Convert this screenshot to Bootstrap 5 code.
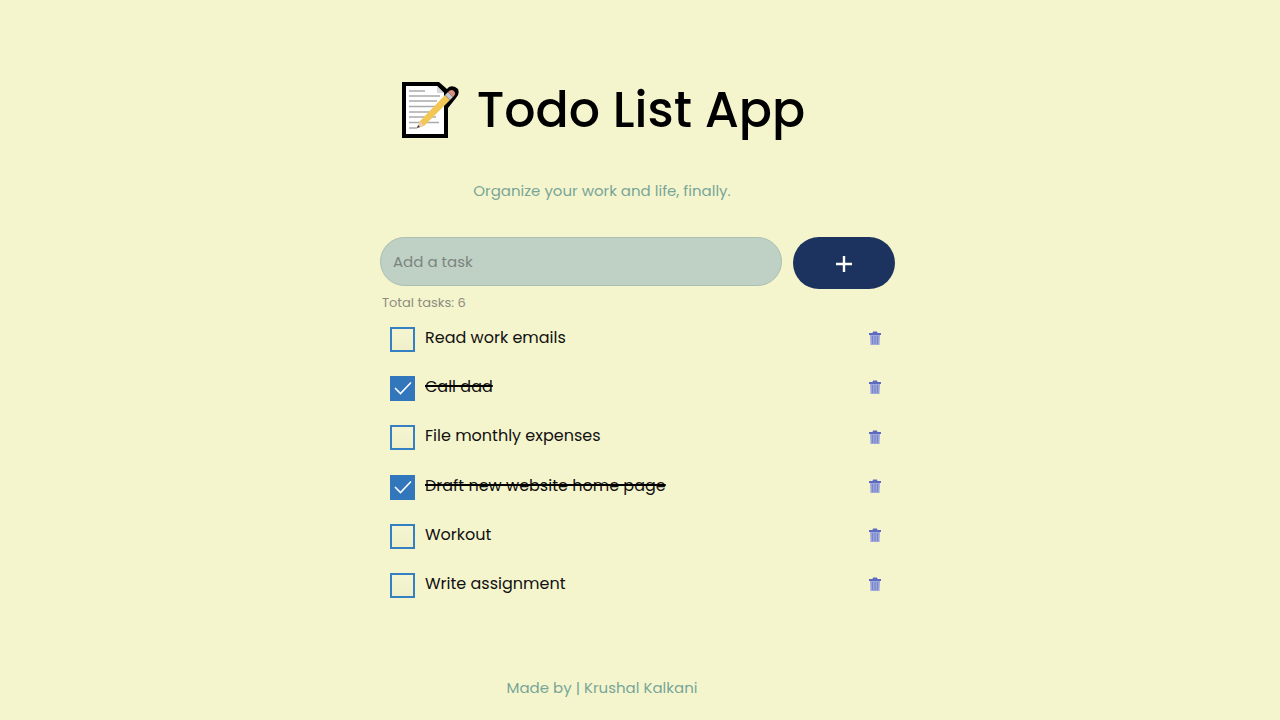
<!DOCTYPE html>
<html lang="en">
<head>
<meta charset="utf-8">
<meta name="viewport" content="width=device-width, initial-scale=1">
<title>Todo List App</title>
<link href="https://cdn.jsdelivr.net/npm/bootstrap@5.3.0/dist/css/bootstrap.min.css" rel="stylesheet">
<style>
body { background: #f5f5cd; color: #111; font-family: Poppins, Inter, sans-serif; font-size: 16px; line-height: 24px; }
.todo-app { max-width: 520px; }
.todo-centered { padding-right: 76px; }
.todo-title { color: #000; font-size: 49px; line-height: 60px; font-weight: 500; }
.todo-title svg { margin-right: 18px; }
.todo-muted { color: #78a598; font-size: 15px; }
.todo-sub { margin: 39px 0 0; }
.todo-form { padding: 34px 5px 0 0; }
.todo-input, .todo-input:focus { height: 49px; padding: 0 12px; line-height: 32px; background: #bfd0c4; border: 1px solid #aabfb2; font-size: 15px; }
.todo-input::placeholder { color: #7b8580; }
.todo-add { width: 102px; height: 52px; margin-left: 11px; background: #1d335f; }
.todo-add:hover { background: #2a4478; }
.todo-count { margin: 4px 2px 0; color: #8b8c80; font-size: 13px; line-height: 20px; }
.todo-list { min-height: 271px; margin: 14px 0 0; padding: 0 18px 0 10px; }
.todo-item { height: 25px; }
.todo-item label { margin-left: 10px; line-height: 22px; }
.todo-del { height: 22px; }
.todo-check.form-check-input { width: 25px; height: 25px; border: 2px solid #3580c2; border-radius: 0; background-color: transparent; background-image: linear-gradient(#f5f5d2, #efefc9); }
.todo-check.form-check-input:checked { background-color: #3276bb; border-color: #3276bb; background-size: 21px 21px; background-image: url("data:image/svg+xml,%3Csvg xmlns='http://www.w3.org/2000/svg' viewBox='0 0 21 21'%3E%3Cpath d='M3 10l5.500 5.500L19 4.500' fill='none' stroke='%23fff' stroke-width='1.6'/%3E%3C/svg%3E"); }
.todo-check:checked + label { text-decoration: line-through; text-decoration-color: #000; text-decoration-thickness: 2px; }
.todo-footer { padding-top: 78px; }
</style>
</head>
<body>
<main class="todo-app container-fluid p-0 pt-5">
  <header class="todo-centered text-center pt-4">
    <h1 class="todo-title d-flex justify-content-center align-items-center mt-2 mb-0 text-nowrap">
      <svg class="flex-shrink-0" width="60" height="60" viewBox="0 0 60 60" aria-hidden="true">
        <path d="M3 2H40L48 9 50 7Q55 5 59 9Q61 14 57 18L49 28V58H3Z" fill="#000"/>
        <path d="M7 6H38L45 13V54H7Z" fill="#fff"/>
        <path d="M38 6V13H45Z" fill="#d9d9d9"/>
        <path d="M10 11H26M10 16H41M10 21H38M10 26.500H36M10 32H34M10 37H37M10 42.500H40M10 48H18" stroke="#aaa" stroke-width="1.6"/>
        <path d="M18 48L21 41 46 15 51 20 25 46Z" fill="#f3c756"/>
        <path d="M18 48L21 41 25 46Z" fill="#ecceb4"/>
        <path d="M18 48L19 45 21 47Z" fill="#333"/>
        <path d="M46 15L49 12 54 17 51 20Z" fill="#c5c7ce"/>
        <path d="M49 12Q52 8.500 55 11Q57.500 14 54 17Z" fill="#d98f83"/>
      </svg>
      <span>Todo List App</span>
    </h1>
    <p class="todo-muted todo-sub">Organize your work and life, finally.</p>
  </header>
  <form class="todo-form d-flex align-items-start" onsubmit="return false">
    <input id="new-task" class="todo-input form-control rounded-pill flex-grow-1" type="text" placeholder="Add a task" aria-label="Add a task">
    <button class="todo-add btn rounded-pill p-0 flex-shrink-0" type="submit" aria-label="Add task">
      <svg width="18" height="18" viewBox="0 0 18 18" aria-hidden="true"><path d="M9 1V17M1 9H17" stroke="#fff" stroke-width="2.4"/></svg>
    </button>
  </form>
  <div class="todo-count">Total tasks: 6</div>
  <ul class="todo-list list-unstyled d-flex flex-column justify-content-between">
    <li class="todo-item d-flex align-items-start"><input class="todo-check form-check-input m-0" type="checkbox" id="t1"><label for="t1">Read work emails</label><button class="todo-del btn border-0 p-0 ms-auto lh-1" type="button" aria-label="Delete Read work emails"><svg width="14" height="16" aria-hidden="true"><use href="#trash"/></svg></button></li>
    <li class="todo-item d-flex align-items-start"><input class="todo-check form-check-input m-0" type="checkbox" id="t2" checked><label for="t2">Call dad</label><button class="todo-del btn border-0 p-0 ms-auto lh-1" type="button" aria-label="Delete Call dad"><svg width="14" height="16" aria-hidden="true"><use href="#trash"/></svg></button></li>
    <li class="todo-item d-flex align-items-start"><input class="todo-check form-check-input m-0" type="checkbox" id="t3"><label for="t3">File monthly expenses</label><button class="todo-del btn border-0 p-0 ms-auto lh-1" type="button" aria-label="Delete File monthly expenses"><svg width="14" height="16" aria-hidden="true"><use href="#trash"/></svg></button></li>
    <li class="todo-item d-flex align-items-start"><input class="todo-check form-check-input m-0" type="checkbox" id="t4" checked><label for="t4">Draft new website home page</label><button class="todo-del btn border-0 p-0 ms-auto lh-1" type="button" aria-label="Delete Draft new website home page"><svg width="14" height="16" aria-hidden="true"><use href="#trash"/></svg></button></li>
    <li class="todo-item d-flex align-items-start"><input class="todo-check form-check-input m-0" type="checkbox" id="t5"><label for="t5">Workout</label><button class="todo-del btn border-0 p-0 ms-auto lh-1" type="button" aria-label="Delete Workout"><svg width="14" height="16" aria-hidden="true"><use href="#trash"/></svg></button></li>
    <li class="todo-item d-flex align-items-start"><input class="todo-check form-check-input m-0" type="checkbox" id="t6"><label for="t6">Write assignment</label><button class="todo-del btn border-0 p-0 ms-auto lh-1" type="button" aria-label="Delete Write assignment"><svg width="14" height="16" aria-hidden="true"><use href="#trash"/></svg></button></li>
  </ul>
  <footer class="todo-centered todo-muted todo-footer text-center">Made by | Krushal Kalkani</footer>
</main>
<svg class="d-none" aria-hidden="true">
  <symbol id="trash" viewBox="0 0 14 16">
    <path d="M2 5H12L11.500 15H2.500Z" fill="#9fa8da"/>
    <path d="M4.500 6V14M7 6V14M9.500 6V14" stroke="#7986cb" stroke-width="1.2"/>
    <path d="M1 3H4.500L5 1.500H9L9.500 3H13V5H1Z" fill="#5c6bc0"/>
  </symbol>
</svg>
<script src="https://cdn.jsdelivr.net/npm/bootstrap@5.3.0/dist/js/bootstrap.bundle.min.js"></script>
</body>
</html>
